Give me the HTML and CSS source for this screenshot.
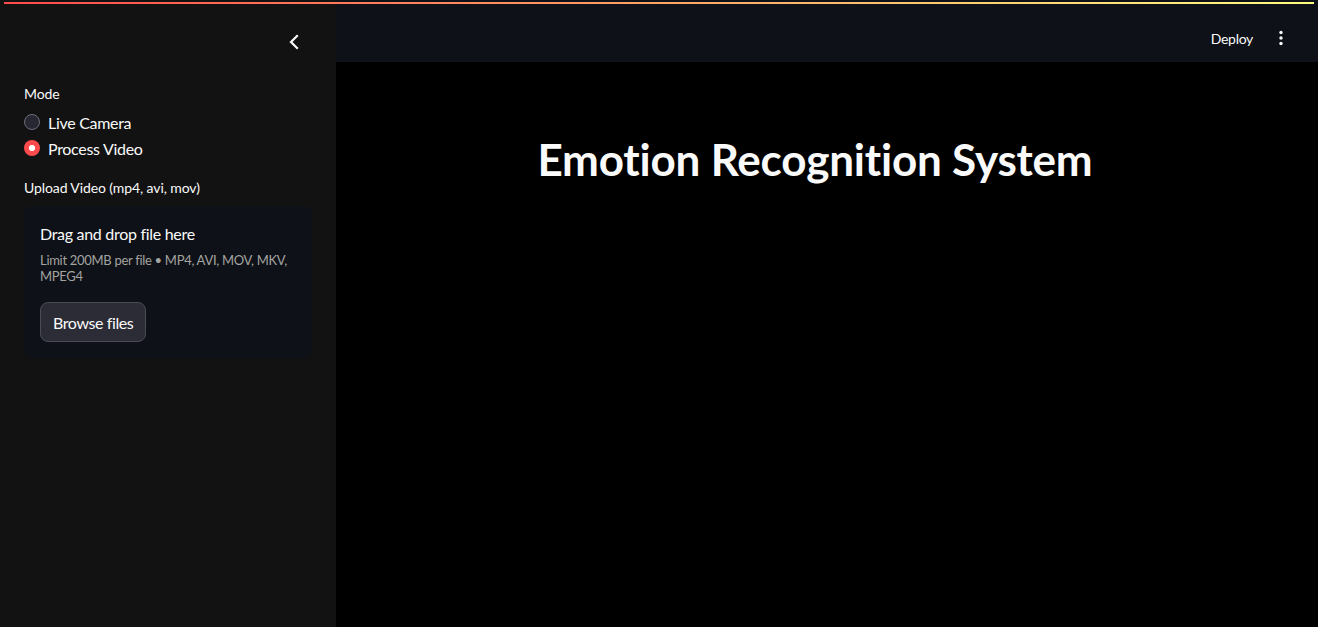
FILE: index.html
```html
<!DOCTYPE html>
<html lang="en">
<head>
<meta charset="utf-8">
<title>Emotion Recognition System</title>
<link rel="stylesheet" href="styles.css">
</head>
<body>
<div class="decoration"></div>
<div class="app">
  <aside class="sidebar">
    <div class="sidebar-top">
      <button class="collapse" aria-label="Collapse sidebar">
        <svg width="24" height="24" viewBox="0 0 24 24"><path d="M15 6l-6 6 6 6" fill="none" stroke="#fafafa" stroke-width="2.2" stroke-linecap="square" stroke-linejoin="miter"/></svg>
      </button>
    </div>
    <div class="widget-label">Mode</div>
    <div class="radio-group">
      <label class="radio"><span class="dot"></span>Live Camera</label>
      <label class="radio checked"><span class="dot"></span>Process Video</label>
    </div>
    <div class="widget-label upload-label">Upload Video (mp4, avi, mov)</div>
    <div class="dropzone">
      <div class="drop-title">Drag and drop file here</div>
      <div class="drop-limit">Limit 200MB per file • MP4, AVI, MOV, MKV, MPEG4</div>
      <button class="browse">Browse files</button>
    </div>
  </aside>
  <div class="main">
    <header class="header">
      <span class="deploy">Deploy</span>
      <span class="menu">
        <svg width="6" height="16" viewBox="0 0 6 16"><circle cx="3" cy="2.5" r="1.7" fill="#fafafa"/><circle cx="3" cy="8" r="1.7" fill="#fafafa"/><circle cx="3" cy="13.5" r="1.7" fill="#fafafa"/></svg>
      </span>
    </header>
    <section class="content">
      <h1 class="title">Emotion Recognition System</h1>
    </section>
  </div>
</div>
</body>
</html>
```

FILE: styles.css
```css
html, body {
  margin: 0;
  padding: 0;
  height: 100%;
  background: #000;
  overflow: hidden;
}
body {
  font-family: "Lato", "Noto Sans", sans-serif;
  color: #fafafa;
}
.decoration {
  position: absolute;
  top: 2px;
  left: 4px;
  right: 4px;
  height: 2px;
  background: linear-gradient(90deg, #ff4b4b, #fffd80);
  z-index: 10;
}
.app {
  display: flex;
  height: 100vh;
}
.sidebar {
  width: 336px;
  flex: none;
  background: #121212;
  padding: 30px 24px 0 24px;
  box-sizing: border-box;
  letter-spacing: -0.3px;
}
.sidebar-top {
  display: flex;
  justify-content: flex-end;
  padding-right: 6px;
  height: 24px;
}
.collapse {
  background: none;
  border: 0;
  padding: 0;
  width: 24px;
  height: 24px;
  display: flex;
  align-items: center;
  justify-content: center;
}
.widget-label {
  font-size: 14px;
  line-height: 20px;
  margin-top: 30px;
  letter-spacing: -0.1px;
}
.upload-label {
  margin-top: 17px;
}
.radio-group {
  display: flex;
  flex-direction: column;
  margin-top: 5px;
}
.radio {
  display: flex;
  align-items: center;
  height: 26px;
  font-size: 16px;
  gap: 8px;
}
.dot {
  width: 16px;
  height: 16px;
  box-sizing: border-box;
  border-radius: 50%;
  background: #262730;
  border: 1px solid #6b6d78;
}
.checked .dot {
  border: 0;
  background: radial-gradient(circle, #fff 0, #fff 2.8px, #ff4b4b 3.4px);
}
.dropzone {
  margin-top: 8px;
  background: #0e1117;
  border-radius: 8px;
  padding: 16px;
}
.drop-title {
  font-size: 16px;
  line-height: 24px;
}
.drop-limit {
  margin-top: 6px;
  font-size: 13px;
  line-height: 16px;
  color: #a3a3a0;
  letter-spacing: -0.3px;
}
.browse {
  margin-top: 18px;
  height: 40px;
  padding: 0 12px;
  background: #2b2c36;
  color: #fafafa;
  border: 1px solid #4a4b55;
  border-radius: 8px;
  font-family: inherit;
  font-size: 16px;
  letter-spacing: -0.4px;
}
.main {
  flex: 1;
  display: flex;
  flex-direction: column;
}
.header {
  height: 62px;
  background: #0e1117;
  display: flex;
  align-items: center;
  justify-content: flex-end;
  padding: 14px 34px 0 0;
  box-sizing: border-box;
  gap: 25px;
}
.deploy {
  font-size: 14px;
  letter-spacing: -0.3px;
}
.menu {
  display: flex;
  align-items: center;
}
.content {
  flex: 1;
  padding: 71px 24px 0 0;
}
.title {
  margin: 0;
  text-align: center;
  font-size: 44px;
  line-height: 53px;
  font-weight: 700;
  letter-spacing: -0.2px;
}
```
